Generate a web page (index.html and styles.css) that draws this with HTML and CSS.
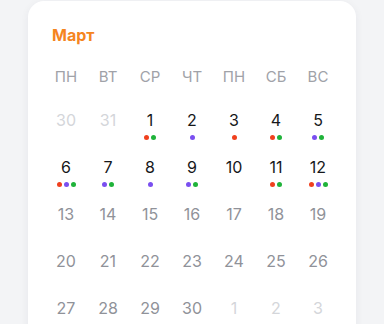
FILE: index.html
```html
<!DOCTYPE html>
<html lang="ru">
<head>
<meta charset="utf-8">
<link rel="stylesheet" href="styles.css">
</head>
<body>
<div class="card">
  <div class="title">Март</div>
  <div class="weekdays">
    <span>ПН</span><span>ВТ</span><span>СР</span><span>ЧТ</span><span>ПН</span><span>СБ</span><span>ВС</span>
  </div>
  <div class="grid">
    <div class="day other"><span class="num">30</span></div>
    <div class="day other"><span class="num">31</span></div>
    <div class="day active"><span class="num">1</span><div class="dots"><i class="r"></i><i class="g"></i></div></div>
    <div class="day active"><span class="num">2</span><div class="dots"><i class="p"></i></div></div>
    <div class="day active"><span class="num">3</span><div class="dots"><i class="r"></i></div></div>
    <div class="day active"><span class="num">4</span><div class="dots"><i class="r"></i><i class="g"></i></div></div>
    <div class="day active"><span class="num">5</span><div class="dots"><i class="p"></i><i class="g"></i></div></div>

    <div class="day active"><span class="num">6</span><div class="dots"><i class="r"></i><i class="p"></i><i class="g"></i></div></div>
    <div class="day active"><span class="num">7</span><div class="dots"><i class="p"></i><i class="g"></i></div></div>
    <div class="day active"><span class="num">8</span><div class="dots"><i class="p"></i></div></div>
    <div class="day active"><span class="num">9</span><div class="dots"><i class="p"></i><i class="g"></i></div></div>
    <div class="day active"><span class="num">10</span></div>
    <div class="day active"><span class="num">11</span><div class="dots"><i class="r"></i><i class="g"></i></div></div>
    <div class="day active"><span class="num">12</span><div class="dots"><i class="r"></i><i class="p"></i><i class="g"></i></div></div>

    <div class="day"><span class="num">13</span></div>
    <div class="day"><span class="num">14</span></div>
    <div class="day"><span class="num">15</span></div>
    <div class="day"><span class="num">16</span></div>
    <div class="day"><span class="num">17</span></div>
    <div class="day"><span class="num">18</span></div>
    <div class="day"><span class="num">19</span></div>

    <div class="day"><span class="num">20</span></div>
    <div class="day"><span class="num">21</span></div>
    <div class="day"><span class="num">22</span></div>
    <div class="day"><span class="num">23</span></div>
    <div class="day"><span class="num">24</span></div>
    <div class="day"><span class="num">25</span></div>
    <div class="day"><span class="num">26</span></div>

    <div class="day"><span class="num">27</span></div>
    <div class="day"><span class="num">28</span></div>
    <div class="day"><span class="num">29</span></div>
    <div class="day"><span class="num">30</span></div>
    <div class="day other"><span class="num">1</span></div>
    <div class="day other"><span class="num">2</span></div>
    <div class="day other"><span class="num">3</span></div>
  </div>
</div>
</body>
</html>
```
FILE: styles.css
```css
* { box-sizing: border-box; }
html, body { margin: 0; padding: 0; }
body {
  background: #f3f4f6;
  font-family: Inter, "Noto Sans", sans-serif;
  width: 384px;
  height: 324px;
  overflow: hidden;
}
.card {
  margin: 1px 0 0 28px;
  width: 328px;
  height: 400px;
  background: #fff;
  border-radius: 16px;
  box-shadow: 0 2px 8px rgba(30, 40, 60, 0.06);
  padding: 24px 17px;
}
.title {
  padding-left: 7px;
  font-size: 16px;
  font-weight: 700;
  line-height: 20px;
  color: #f5851f;
}
.weekdays {
  margin-top: 22px;
  display: grid;
  grid-template-columns: repeat(7, 42px);
  line-height: 20px;
  font-size: 15px;
  color: #a0a2a8;
  text-align: center;
}
.grid {
  margin-top: 23px;
  display: grid;
  grid-template-columns: repeat(7, 42px);
  grid-auto-rows: 47px;
}
.day {
  display: flex;
  flex-direction: column;
  align-items: center;
}
.num {
  font-size: 16px;
  line-height: 20px;
  color: #909299;
}
.day.active .num { color: #16171a; }
.day.other .num { color: #d4d6da; }
.dots {
  margin-top: 5px;
  display: flex;
  gap: 2px;
}
.dots i {
  width: 5px;
  height: 5px;
  border-radius: 50%;
  display: block;
}
.dots .r { background: #f0401e; }
.dots .p { background: #7a4ff0; }
.dots .g { background: #1fb33a; }
```
